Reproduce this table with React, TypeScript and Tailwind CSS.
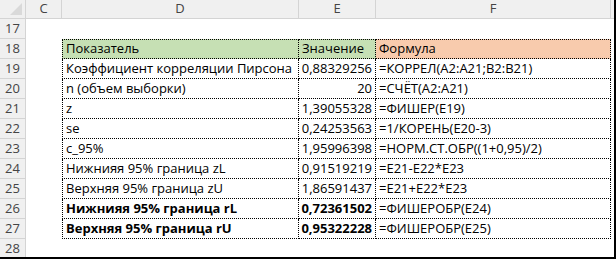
import React from "react";

const rows: { n: number; d: string; e: string; f: string; bold?: boolean }[] = [
  { n: 19, d: "Коэффициент корреляции Пирсона", e: "0,88329256", f: "=КОРРЕЛ(A2:A21;B2:B21)" },
  { n: 20, d: "n (объем выборки)", e: "20", f: "=СЧЁТ(A2:A21)" },
  { n: 21, d: "z", e: "1,39055328", f: "=ФИШЕР(E19)" },
  { n: 22, d: "se", e: "0,24253563", f: "=1/КОРЕНЬ(E20-3)" },
  { n: 23, d: "c_95%", e: "1,95996398", f: "=НОРМ.СТ.ОБР((1+0,95)/2)" },
  { n: 24, d: "Нижнияя 95% граница zL", e: "0,91519219", f: "=E21-E22*E23" },
  { n: 25, d: "Верхняя 95% граница zU", e: "1,86591437", f: "=E21+E22*E23" },
  { n: 26, d: "Нижнияя 95% граница rL", e: "0,72361502", f: "=ФИШЕРОБР(E24)", bold: true },
  { n: 27, d: "Верхняя 95% граница rU", e: "0,95322228", f: "=ФИШЕРОБР(E25)", bold: true },
];

function RowNum({ n }: { n: number }) {
  return (
    <div className="h-5 flex items-center justify-center bg-[#f0f0f0] border-b border-r border-[#d4d4d4] text-[#444]">
      {n}
    </div>
  );
}

export default function App() {
  const cell = "h-5 flex items-center px-[3px] border-dotted border-black border-r border-b whitespace-nowrap overflow-hidden";
  return (
    <div
      className="w-[616px] h-[259px] bg-white overflow-hidden border-r-2 border-b-2 border-black text-[13px] text-black"
      style={{ fontFamily: '"Open Sans", "Noto Sans", sans-serif' }}
    >
      <div className="grid grid-cols-[26px_36px_237px_77px_235px_1fr]">
        {/* column headers */}
        <div className="h-[19px] bg-[#f0f0f0] border-b border-r border-[#d4d4d4] relative">
          <div className="absolute right-[3px] bottom-[3px] w-0 h-0 border-l-[12px] border-l-transparent border-b-[12px] border-b-[#d9d9d9]" />
        </div>
        {["C", "D", "E", "F"].map((c) => (
          <div key={c} className="h-[19px] bg-[#f0f0f0] border-b border-r border-[#d4d4d4] flex items-center justify-center text-[#444]">
            {c}
          </div>
        ))}
        <div className="h-[19px] bg-[#f0f0f0] border-b border-[#d4d4d4]" />

        {/* row 17 */}
        <RowNum n={17} />
        <div className="col-span-5 h-5" />

        {/* row 18 header */}
        <RowNum n={18} />
        <div className="h-5" />
        <div className={`${cell} border-l border-t bg-[#c6e0b4]`}>Показатель</div>
        <div className={`${cell} border-t bg-[#c6e0b4]`}>Значение</div>
        <div className={`${cell} border-t bg-[#f8cbad]`}>Формула</div>
        <div className="h-5" />

        {rows.map((r) => (
          <React.Fragment key={r.n}>
            <RowNum n={r.n} />
            <div className="h-5" />
            <div className={`${cell} border-l ${r.bold ? "font-bold" : ""}`}>{r.d}</div>
            <div className={`${cell} justify-end ${r.bold ? "font-bold" : ""}`}>{r.e}</div>
            <div className={cell}>{r.f}</div>
            <div className="h-5" />
          </React.Fragment>
        ))}

        <RowNum n={28} />
        <div className="col-span-5 h-5" />
      </div>
    </div>
  );
}
